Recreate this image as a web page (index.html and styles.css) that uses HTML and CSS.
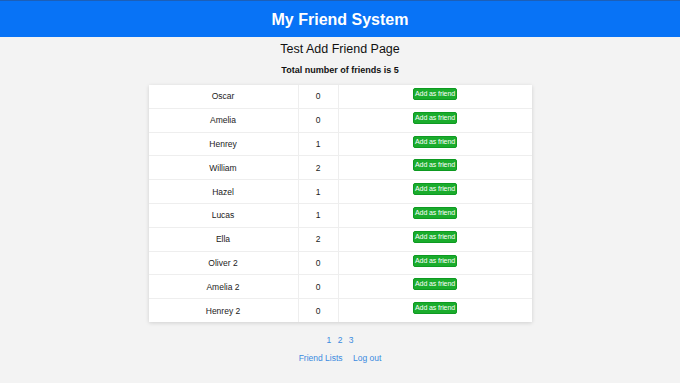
FILE: index.html
```html
<!DOCTYPE html>
<html>
  <head>
    <title>Add Friend</title>
    <meta charset="UTF-8">
    <link rel="stylesheet" href="styles.css">
  </head>

  <body>
    <div class="header">My Friend System</div>
    <h2>Test Add Friend Page</h2>
    <p class="total">Total number of friends is 5</p>

    <table class="friends">
      <tr><td class="name">Oscar</td><td class="count">0</td><td class="action"><button type="button">Add as friend</button></td></tr>
      <tr><td class="name">Amelia</td><td class="count">0</td><td class="action"><button type="button">Add as friend</button></td></tr>
      <tr><td class="name">Henrey</td><td class="count">1</td><td class="action"><button type="button">Add as friend</button></td></tr>
      <tr><td class="name">William</td><td class="count">2</td><td class="action"><button type="button">Add as friend</button></td></tr>
      <tr><td class="name">Hazel</td><td class="count">1</td><td class="action"><button type="button">Add as friend</button></td></tr>
      <tr><td class="name">Lucas</td><td class="count">1</td><td class="action"><button type="button">Add as friend</button></td></tr>
      <tr><td class="name">Ella</td><td class="count">2</td><td class="action"><button type="button">Add as friend</button></td></tr>
      <tr><td class="name">Oliver 2</td><td class="count">0</td><td class="action"><button type="button">Add as friend</button></td></tr>
      <tr><td class="name">Amelia 2</td><td class="count">0</td><td class="action"><button type="button">Add as friend</button></td></tr>
      <tr><td class="name">Henrey 2</td><td class="count">0</td><td class="action"><button type="button">Add as friend</button></td></tr>
    </table>

    <div class="pages">
      <a href="#">1</a>
      <a href="#">2</a>
      <a href="#">3</a>
    </div>
    <div class="links">
      <a href="#">Friend Lists</a>
      <a href="#">Log out</a>
    </div>
  </body>
</html>
```

FILE: styles.css
```css
body {
  font-family: "Liberation Sans", Arial, sans-serif;
  margin: 0;
  padding: 0;
  background-color: #f3f3f3;
  color: #222;
}

.header {
  height: 36px;
  line-height: 37px;
  border-top: 1px solid #1c5fb8;
  background-color: #0873f6;
  color: #fff;
  font-size: 16px;
  font-weight: bold;
  text-align: center;
}

h2 {
  margin: 5px 0 0;
  font-size: 12.5px;
  font-weight: normal;
  text-align: center;
  color: #111;
}

.total {
  margin: 9px 0 0;
  font-size: 9px;
  font-weight: bold;
  text-align: center;
  color: #111;
}

.friends {
  width: 383px;
  margin: 10px auto 0;
  border-collapse: collapse;
  background-color: #fff;
  box-shadow: 0 1px 4px rgba(0, 0, 0, 0.15);
  font-size: 8.5px;
}

.friends td {
  height: 22.8px;
  padding: 0;
  border-bottom: 1px solid #eee;
  text-align: center;
  vertical-align: middle;
}

.friends tr:last-child td {
  border-bottom: none;
}

.friends .name {
  width: 149px;
  border-right: 1px solid #eee;
}

.friends .count {
  width: 39px;
  border-right: 1px solid #eee;
}

.friends .action {
  vertical-align: top;
  padding-top: 3px;
  height: 19.8px;
}

button {
  padding: 1px 1px;
  background-color: #1aac2c;
  border: 1px solid #0e9a22;
  border-radius: 2px;
  color: #fff;
  font-family: "Liberation Sans", Arial, sans-serif;
  font-size: 7px;
  line-height: 8px;
  letter-spacing: -0.1px;
  cursor: pointer;
}

.pages {
  margin-top: 13px;
  text-align: center;
  font-size: 8.5px;
}

.pages a {
  margin: 0 2px;
}

.links {
  margin-top: 8px;
  text-align: center;
  font-size: 8.5px;
}

.links a {
  margin: 0 4px;
}

a {
  color: #3a8ae0;
  text-decoration: none;
}
```
